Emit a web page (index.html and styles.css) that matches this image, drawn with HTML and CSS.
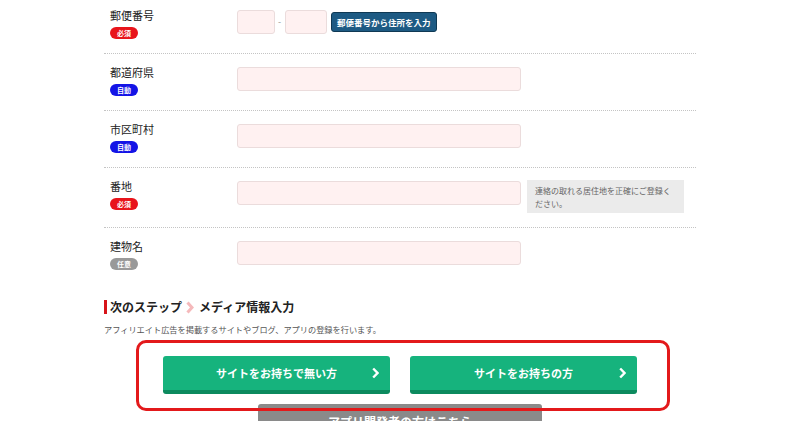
FILE: index.html
```html
<!DOCTYPE html>
<html lang="ja">
<head>
<meta charset="utf-8">
<link rel="stylesheet" href="styles.css">
</head>
<body>
<div class="wrap">
  <div class="form">
    <div class="row">
      <div class="label-col"><span class="label">郵便番号</span><span class="badge req">必須</span></div>
      <div class="field">
        <span class="input zip1"></span>
        <span class="dash">-</span>
        <span class="input zip2"></span>
        <span class="zip-btn">郵便番号から住所を入力</span>
      </div>
    </div>
    <div class="row">
      <div class="label-col"><span class="label">都道府県</span><span class="badge auto">自動</span></div>
      <div class="field"><span class="input"></span></div>
    </div>
    <div class="row">
      <div class="label-col"><span class="label">市区町村</span><span class="badge auto">自動</span></div>
      <div class="field"><span class="input"></span></div>
    </div>
    <div class="row">
      <div class="label-col"><span class="label">番地</span><span class="badge req">必須</span></div>
      <div class="field">
        <span class="input"></span>
        <span class="note">連絡の取れる居住地を正確にご登録ください。</span>
      </div>
    </div>
    <div class="row">
      <div class="label-col"><span class="label">建物名</span><span class="badge opt">任意</span></div>
      <div class="field"><span class="input"></span></div>
    </div>
  </div>

  <h2 class="step">次のステップ<svg class="step-arrow" width="8" height="13" viewBox="0 0 8 13"><polyline points="1.5,1.5 6,6.5 1.5,11.5" fill="none" stroke="#f5b9bb" stroke-width="3" stroke-linejoin="miter"/></svg>メディア情報入力</h2>
  <p class="desc">アフィリエイト広告を掲載するサイトやブログ、アプリの登録を行います。</p>

  <div class="cta">
    <div class="green-row">
      <a class="btn-green"><span></span><span class="btn-text">サイトをお持ちで無い方</span><svg class="chev" width="7" height="12" viewBox="0 0 7 12"><polyline points="1.2,1.5 5.5,6 1.2,10.5" fill="none" stroke="#fff" stroke-width="2.4"/></svg></a>
      <a class="btn-green"><span></span><span class="btn-text">サイトをお持ちの方</span><svg class="chev" width="7" height="12" viewBox="0 0 7 12"><polyline points="1.2,1.5 5.5,6 1.2,10.5" fill="none" stroke="#fff" stroke-width="2.4"/></svg></a>
    </div>
    <a class="btn-gray">アプリ開発者の方はこちら</a>
    <div class="highlight"></div>
  </div>
</div>
</body>
</html>
```

FILE: styles.css
```css
html, body {
  margin: 0;
  padding: 0;
  background: #ffffff;
}
body {
  font-family: "Noto Sans CJK JP", "Noto Sans", sans-serif;
  color: #333333;
}
.wrap {
  width: 592px;
  margin: 0 auto;
}
.row {
  display: flex;
  padding: 11px 0 14px;
  border-bottom: 1px dotted #c4c4c4;
}
.row:first-child {
  padding-top: 8px;
}
.row:last-child {
  border-bottom: none;
}
.label-col {
  flex: 0 0 133px;
  box-sizing: border-box;
  padding-left: 6px;
  display: flex;
  flex-direction: column;
  align-items: flex-start;
}
.label {
  font-size: 11px;
  line-height: 14px;
  color: #222222;
}
.badge {
  margin-top: 5px;
  width: 28px;
  height: 12px;
  border-radius: 6px;
  font-size: 7px;
  line-height: 12px;
  color: #ffffff;
  text-align: center;
  font-weight: bold;
}
.badge.req { background: #e8141b; }
.badge.auto { background: #1414e6; }
.badge.opt { background: #999999; }
.field {
  display: flex;
  align-items: flex-start;
  gap: 6px;
  margin-top: 2px;
}
.input {
  display: block;
  width: 284px;
  height: 24px;
  box-sizing: border-box;
  background: #fff1f1;
  border: 1px solid #ebdcdc;
  border-radius: 3px;
}
.input.zip1 { width: 38px; }
.input.zip2 { width: 42px; }
.field .dash {
  width: 0;
  margin: 0 -1px;
  font-size: 9px;
  line-height: 24px;
  color: #999999;
  text-indent: -2px;
}
.zip-btn {
  margin-top: 2px;
  margin-left: -2px;
  height: 20px;
  box-sizing: border-box;
  padding: 0 5px;
  background: #1d5a83;
  border: 1px solid #0f3954;
  border-radius: 3px;
  color: #ffffff;
  font-size: 8.5px;
  font-weight: bold;
  line-height: 18px;
  white-space: nowrap;
}
.note {
  display: block;
  margin-top: -1px;
  width: 157px;
  box-sizing: border-box;
  padding: 4px 8px 3px;
  background: #ebebeb;
  color: #666666;
  font-size: 8px;
  line-height: 13px;
}
.step {
  margin: 16px 0 0;
  border-left: 3px solid #d7141a;
  padding-left: 3px;
  font-size: 12px;
  line-height: 14px;
  font-weight: bold;
  color: #222222;
  display: flex;
  align-items: center;
}
.step-arrow {
  margin: 0 5px 0 4px;
}
.desc {
  margin: 9px 0 0;
  font-size: 8.2px;
  line-height: 12px;
  color: #555555;
}
.cta {
  position: relative;
  margin-top: 21px;
}
.green-row {
  display: flex;
  justify-content: center;
  gap: 20px;
}
.btn-green {
  width: 227px;
  height: 38px;
  box-sizing: border-box;
  display: grid;
  grid-template-columns: 1fr auto 1fr;
  align-items: center;
  background: #16b37d;
  border-bottom: 4px solid #0c8a5e;
  border-radius: 3px;
  color: #ffffff;
  font-size: 11px;
  font-weight: bold;
  padding-right: 11px;
  padding-left: 11px;
}
.btn-text {
  white-space: nowrap;
}
.chev {
  justify-self: end;
}
.btn-gray {
  display: block;
  width: 284px;
  height: 38px;
  margin: 10px auto 0;
  background: #8a8a8a;
  border-radius: 3px;
  color: #ffffff;
  font-size: 12px;
  font-weight: bold;
  line-height: 36px;
  text-align: center;
}
.highlight {
  position: absolute;
  top: -16px;
  left: 32px;
  width: 534px;
  height: 71px;
  box-sizing: border-box;
  border: 3px solid #e3191b;
  border-radius: 10px;
  pointer-events: none;
}
```
